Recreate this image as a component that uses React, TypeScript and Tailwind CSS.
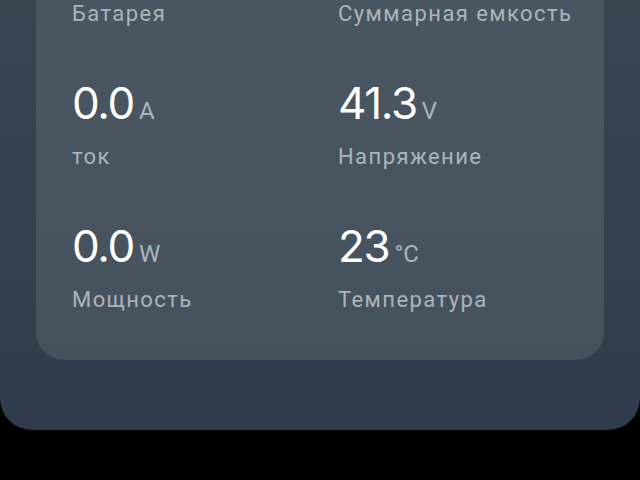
import React from "react";

// ── Battery stats card ──────────────────────────────────────

type Stat = { value: string; unit: string; label: string };

const stats: Stat[] = [
    { value: "100", unit: "%", label: "Батарея" },
    { value: "100", unit: "Ah", label: "Суммарная емкость" },
    { value: "0.0", unit: "A", label: "ток" },
    { value: "41.3", unit: "V", label: "Напряжение" },
    { value: "0.0", unit: "W", label: "Мощность" },
    { value: "23", unit: "°C", label: "Температура" },
];

function StatCell({ value, unit, label }: Stat) {
    return (
        <div className="flex flex-col">
            <div className="flex items-baseline h-[48px]">
                <span className="text-[44px] leading-[48px] text-white font-[Inter,sans-serif] tracking-[-0.03em]">
                    {value}
                </span>
                <span className="ml-[5px] text-[24px] leading-[48px] text-[#aab4be] font-[Roboto,sans-serif]">
                    {unit}
                </span>
            </div>
            <div className="mt-[16px] text-[22px] leading-[28px] text-[#abb4bd] font-[Roboto,sans-serif] tracking-[0.065em] whitespace-nowrap">
                {label}
            </div>
        </div>
    );
}

export default function App() {
    return (
        <div className="h-[480px] w-[640px] bg-black overflow-hidden">
            <div className="mt-[-140px] px-[36px] pt-[36px] pb-[70px] rounded-b-[32px] bg-gradient-to-b from-[#3c4854] to-[#303c4b]">
                <div className="px-[36px] pt-[40px] pb-[46px] rounded-[28px] bg-gradient-to-b from-[#4b5661] to-[#45525e]">
                    <div className="grid grid-cols-2 gap-x-[36px] gap-y-[51px]">
                        {stats.map((s) => (
                            <StatCell key={s.label} {...s} />
                        ))}
                    </div>
                </div>
            </div>
        </div>
    );
}
